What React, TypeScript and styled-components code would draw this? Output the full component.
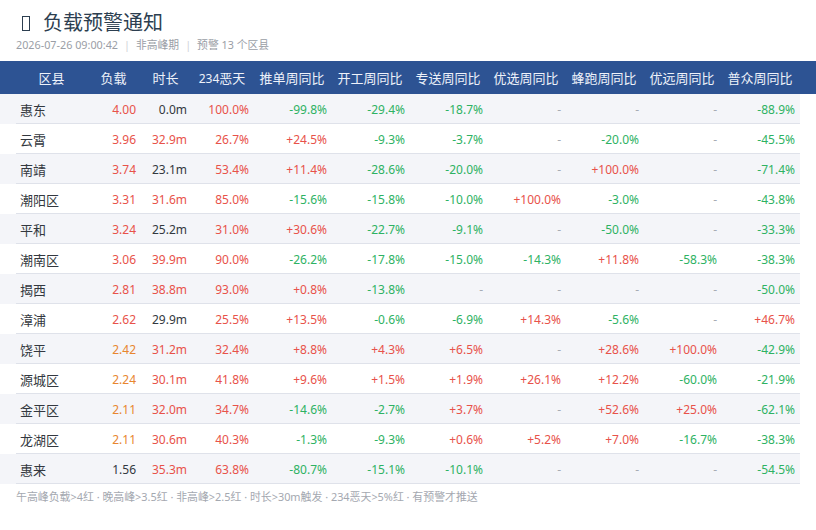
import React from 'react';
import styled, { createGlobalStyle } from 'styled-components';

type Tone = 'red' | 'orange' | 'green' | 'dark' | 'muted';

const COLORS: Record<Tone, string> = {
  red: '#e8524a',
  orange: '#e8862f',
  green: '#2eb263',
  dark: '#333840',
  muted: '#a8acb4',
};

// name, load, duration, 234恶天, then the seven weekly changes
const ROWS: string[][] = [
  ['惠东', '4.00', '0.0m', '100.0%', '-99.8%', '-29.4%', '-18.7%', '-', '-', '-', '-88.9%'],
  ['云霄', '3.96', '32.9m', '26.7%', '+24.5%', '-9.3%', '-3.7%', '-', '-20.0%', '-', '-45.5%'],
  ['南靖', '3.74', '23.1m', '53.4%', '+11.4%', '-28.6%', '-20.0%', '-', '+100.0%', '-', '-71.4%'],
  ['潮阳区', '3.31', '31.6m', '85.0%', '-15.6%', '-15.8%', '-10.0%', '+100.0%', '-3.0%', '-', '-43.8%'],
  ['平和', '3.24', '25.2m', '31.0%', '+30.6%', '-22.7%', '-9.1%', '-', '-50.0%', '-', '-33.3%'],
  ['潮南区', '3.06', '39.9m', '90.0%', '-26.2%', '-17.8%', '-15.0%', '-14.3%', '+11.8%', '-58.3%', '-38.3%'],
  ['揭西', '2.81', '38.8m', '93.0%', '+0.8%', '-13.8%', '-', '-', '-', '-', '-50.0%'],
  ['漳浦', '2.62', '29.9m', '25.5%', '+13.5%', '-0.6%', '-6.9%', '+14.3%', '-5.6%', '-', '+46.7%'],
  ['饶平', '2.42', '31.2m', '32.4%', '+8.8%', '+4.3%', '+6.5%', '-', '+28.6%', '+100.0%', '-42.9%'],
  ['源城区', '2.24', '30.1m', '41.8%', '+9.6%', '+1.5%', '+1.9%', '+26.1%', '+12.2%', '-60.0%', '-21.9%'],
  ['金平区', '2.11', '32.0m', '34.7%', '-14.6%', '-2.7%', '+3.7%', '-', '+52.6%', '+25.0%', '-62.1%'],
  ['龙湖区', '2.11', '30.6m', '40.3%', '-1.3%', '-9.3%', '+0.6%', '+5.2%', '+7.0%', '-16.7%', '-38.3%'],
  ['惠来', '1.56', '35.3m', '63.8%', '-80.7%', '-15.1%', '-10.1%', '-', '-', '-', '-54.5%'],
];

const loadTone = (v: string): Tone => {
  const n = parseFloat(v);
  if (n > 2.5) return 'red';
  if (n > 2) return 'orange';
  return 'dark';
};

const durationTone = (v: string): Tone => (parseFloat(v) >= 30 ? 'red' : 'dark');

const badDayTone = (v: string): Tone => (parseFloat(v) > 5 ? 'red' : 'dark');

const changeTone = (v: string): Tone => {
  if (v === '-') return 'muted';
  return v.startsWith('+') ? 'red' : 'green';
};

const toneFor = (col: number, v: string): Tone => {
  if (col === 1) return loadTone(v);
  if (col === 2) return durationTone(v);
  if (col === 3) return badDayTone(v);
  return changeTone(v);
};

const GlobalStyle = createGlobalStyle`
  html, body {
    margin: 0;
    padding: 0;
    background: #ffffff;
  }
  body {
    font-family: "Noto Sans", "Noto Sans CJK SC", sans-serif;
    color: #333840;
  }
`;

const COLUMNS = '71px 53px 51px 62px repeat(7, 78px)';

const Page = styled.div`
  width: 816px;
  padding-top: 9px;
`;

const Head = styled.div`
  padding: 0 16px;
  margin-bottom: 8px;
`;

const Title = styled.h1`
  display: flex;
  align-items: center;
  margin: 0;
  font-size: 20px;
  font-weight: 400;
  line-height: 28px;
  color: #2c3e50;
`;

const MissingGlyph = styled.span`
  display: inline-block;
  box-sizing: border-box;
  width: 8px;
  height: 15px;
  margin: 0 13px 0 6px;
  border: 1.4px solid #2c3e50;
`;

const Meta = styled.div`
  display: flex;
  align-items: center;
  gap: 6px;
  font-size: 10.8px;
  line-height: 16px;
  color: #9a9ea6;
`;

const Divider = styled.span`
  color: #cfd2d8;
`;

// latin glyphs in this table sit a size below the CJK ones
const Latin = styled.span`
  font-size: 12px;
`;

const HeaderRow = styled.div`
  display: grid;
  grid-template-columns: ${COLUMNS};
  padding-left: 16px;
  height: 33px;
  align-items: center;
  background: #2d5393;
`;

const HeaderCell = styled.div`
  text-align: center;
  font-size: 13px;
  color: #eef2fa;
  white-space: nowrap;
`;

const Row = styled.div<{ $striped: boolean }>`
  display: grid;
  grid-template-columns: ${COLUMNS};
  width: 800px;
  padding-left: 16px;
  box-sizing: border-box;
  height: 30px;
  align-items: center;
  background:
    linear-gradient(#dfe2ea, #dfe2ea) no-repeat 16px 100% / calc(100% - 16px) 1px,
    ${({ $striped }) => ($striped ? '#f4f5f9' : '#ffffff')};
`;

const NameCell = styled.div`
  padding: 0 4px;
  font-size: 13px;
  color: ${COLORS.dark};
  white-space: nowrap;
`;

const Cell = styled.div<{ $tone: Tone }>`
  padding: 0 4px;
  font-size: 12px;
  text-align: right;
  color: ${({ $tone }) => COLORS[$tone]};
  white-space: nowrap;
`;

const Footnote = styled.div`
  padding: 5px 16px 0;
  font-size: 10.9px;
  line-height: 16px;
  color: #a4a8b0;
`;

export default function App() {
  return (
    <Page>
      <GlobalStyle />
      <Head>
        <Title>
          <MissingGlyph />
          负载预警通知
        </Title>
        <Meta>
          <span>2026-07-26 09:00:42</span>
          <Divider>|</Divider>
          <span>非高峰期</span>
          <Divider>|</Divider>
          <span>预警 13 个区县</span>
        </Meta>
      </Head>

      <HeaderRow>
        <HeaderCell>区县</HeaderCell>
        <HeaderCell>负载</HeaderCell>
        <HeaderCell>时长</HeaderCell>
        <HeaderCell>
          <Latin>234</Latin>恶天
        </HeaderCell>
        <HeaderCell>推单周同比</HeaderCell>
        <HeaderCell>开工周同比</HeaderCell>
        <HeaderCell>专送周同比</HeaderCell>
        <HeaderCell>优选周同比</HeaderCell>
        <HeaderCell>蜂跑周同比</HeaderCell>
        <HeaderCell>优远周同比</HeaderCell>
        <HeaderCell>普众周同比</HeaderCell>
      </HeaderRow>

      {ROWS.map(([name, ...values], i) => (
        <Row key={name} $striped={i % 2 === 0}>
          <NameCell>{name}</NameCell>
          {values.map((v, j) => (
            <Cell key={j} $tone={toneFor(j + 1, v)}>
              {v}
            </Cell>
          ))}
        </Row>
      ))}

      <Footnote>
        午高峰负载&gt;4红 · 晚高峰&gt;3.5红 · 非高峰&gt;2.5红 · 时长&gt;30m触发 · 234恶天&gt;5%红 · 有预警才推送
      </Footnote>
    </Page>
  );
}
